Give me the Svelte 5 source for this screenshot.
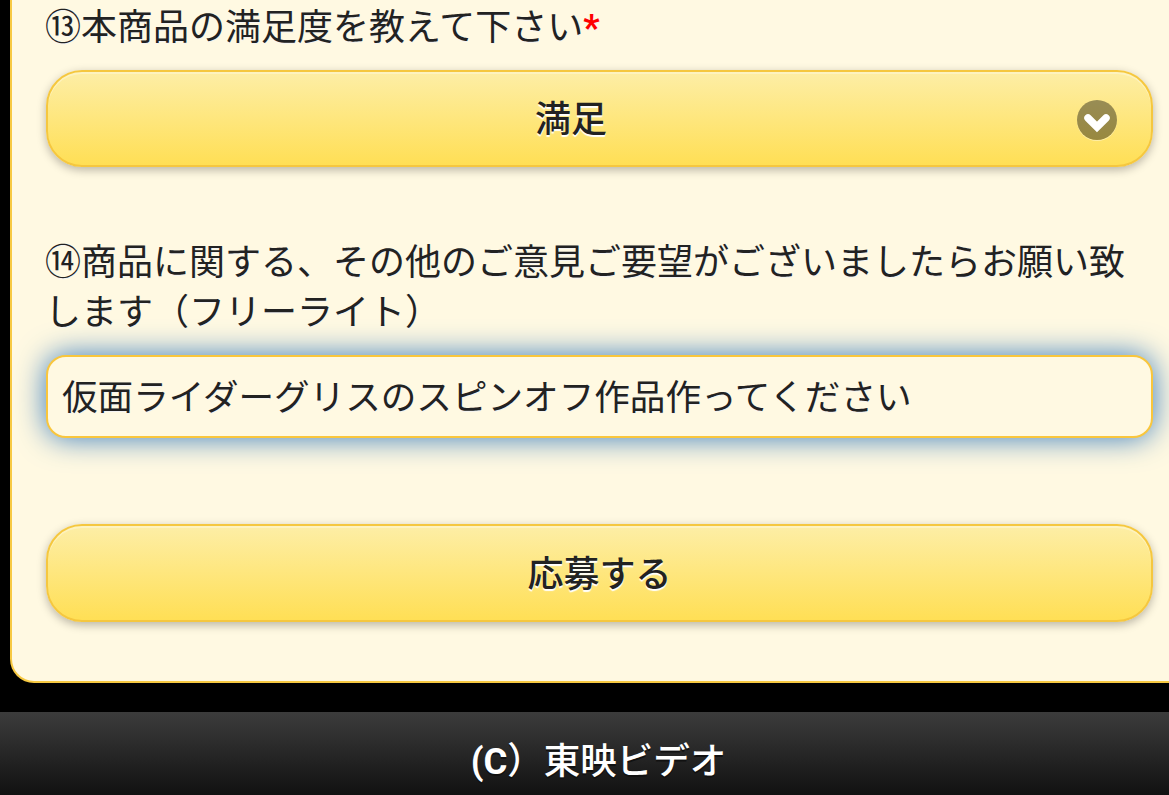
<script>
  // survey form, last two questions plus the submit button
  let comment = "仮面ライダーグリスのスピンオフ作品作ってください";
</script>

<div class="page">
  <div class="card">
    <p class="question first">⑬本商品の満足度を教えて下さい<span class="req">*</span></p>
    <div class="select">
      <span class="select-text">満足</span>
      <span class="arrow" aria-hidden="true">
        <svg viewBox="0 0 40 40" width="40" height="40">
          <path d="M11 18 L20 27 L29 18" fill="none" stroke="#fff" stroke-width="7.5" stroke-linecap="round" stroke-linejoin="miter" />
        </svg>
      </span>
    </div>

    <p class="question second">⑭商品に関する、その他のご意見ご要望がございましたらお願い致します（フリーライト）</p>
    <input class="field" type="text" value={comment} />

    <button class="submit" type="button">応募する</button>
  </div>
  <footer class="footer"><span class="copy">(C</span>）東映ビデオ</footer>
</div>

<style>
  :global(body) {
    background: #000;
    overflow: hidden;
  }

  .page {
    width: 1169px;
    height: 795px;
    overflow: hidden;
    background: #000;
    font-family: Roboto, "Noto Sans CJK JP", sans-serif;
    font-size: 36px;
    line-height: 50px;
    color: #222;
  }

  .card {
    box-sizing: border-box;
    width: 1300px;
    height: 683px;
    margin-left: 10px;
    padding: 3px 0 0 34px;
    background: #fff9e2;
    border-left: 2px solid #f7c942;
    border-bottom: 2px solid #f7c942;
    border-bottom-left-radius: 24px;
  }

  .question {
    width: 1107px;
    margin: 0 0 0 -1px;
    text-shadow: 0 1px 0 #f3f3f3;
  }

  .second {
    margin-top: 71px;
  }

  .req {
    color: #f00;
    font-weight: 700;
  }

  .select,
  .submit {
    box-sizing: border-box;
    width: 1107px;
    margin-left: 0;
    border: 2px solid #f5c73f;
    border-radius: 36px;
    background: linear-gradient(#fdeea6, #ffdf55);
    box-shadow: 0 3px 10px rgba(0, 0, 0, 0.28), inset 0 2px 0 rgba(255, 255, 255, 0.3);
    font-weight: 500;
    text-shadow: 0 2px 1px #fff;
    color: #222;
  }

  .select {
    position: relative;
    height: 97px;
    margin-top: 17px;
    padding: 3px 57px 0 0;
    display: flex;
    align-items: center;
    justify-content: center;
  }

  .arrow {
    position: absolute;
    right: 34px;
    top: 28px;
    width: 40px;
    height: 40px;
    border-radius: 50%;
    background: rgba(0, 0, 0, 0.4);
    box-shadow: 0 1px 0 rgba(255, 255, 255, 0.4);
    display: block;
  }

  .arrow svg {
    display: block;
  }

  .field {
    display: block;
    box-sizing: border-box;
    width: 1107px;
    height: 83px;
    margin: 17px 0 0;
    padding: 0 15px 4px 14px;
    border: 2px solid #f9c63c;
    border-radius: 20px;
    background: #fff9e2;
    box-shadow: 0 0 30px #387bbe;
    outline: none;
    font: inherit;
    font-size: 35.6px;
    color: #222;
    text-shadow: 0 1px 0 #f3f3f3;
  }

  .submit {
    display: block;
    height: 98px;
    margin-top: 86px;
    padding: 4px 0 0;
    font-family: inherit;
    font-size: 36px;
    line-height: 50px;
  }

  .footer {
    height: 83px;
    margin-top: 29px;
    padding-left: 28px;
    background: linear-gradient(#3c3c3c, #111);
    color: #fff;
    text-align: center;
    font-size: 36.5px;
    font-weight: 500;
    line-height: 100px;
    text-shadow: 0 2px 0 #111;
  }

  .copy {
    font-weight: 700;
  }
</style>
